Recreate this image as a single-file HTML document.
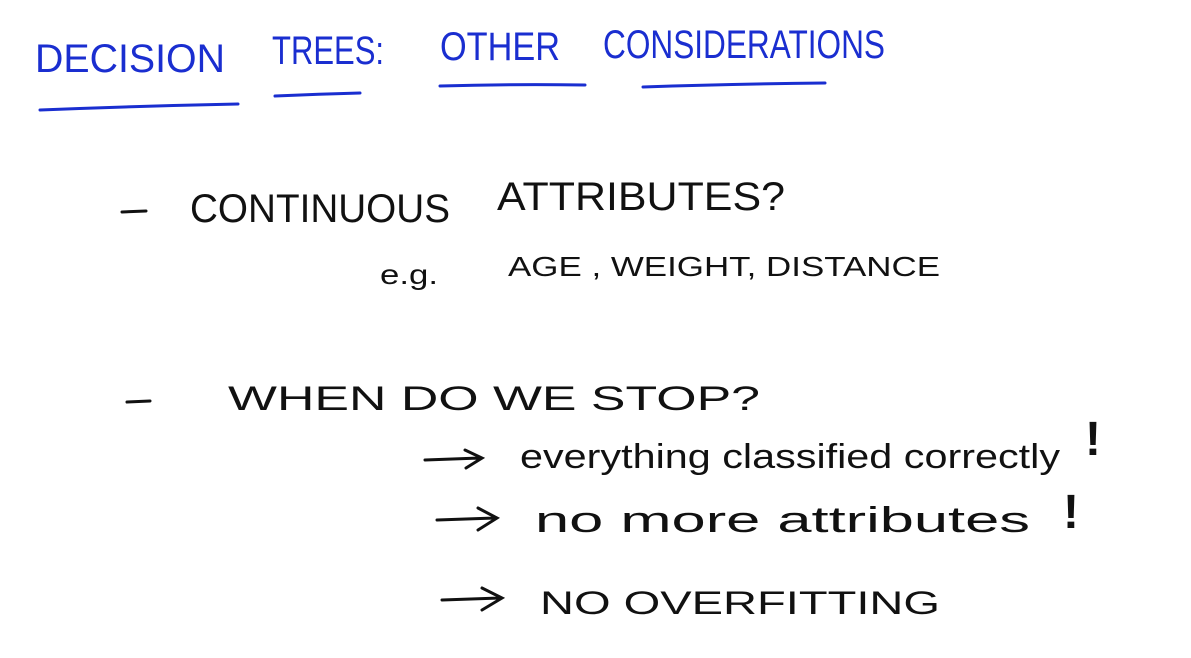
<!DOCTYPE html>
<html><head><meta charset="utf-8"><style>
html,body{margin:0;padding:0;background:#fff;width:1191px;height:658px;overflow:hidden}
svg{display:block}
text{font-family:"Liberation Sans",sans-serif}
</style></head><body>
<svg width="1191" height="658" viewBox="0 0 1191 658">
<g fill="#1a2ed0" font-size="40">
<text x="35" y="72" textLength="190" lengthAdjust="spacingAndGlyphs">DECISION</text>
<text x="272" y="64" textLength="112" lengthAdjust="spacingAndGlyphs">TREES:</text>
<text x="440" y="60" textLength="120" lengthAdjust="spacingAndGlyphs">OTHER</text>
<text x="603" y="58" textLength="282" lengthAdjust="spacingAndGlyphs">CONSIDERATIONS</text>
</g>
<g stroke="#1a2ed0" stroke-width="3" fill="none" stroke-linecap="round">
<path d="M40 110 Q140 106 238 104"/>
<path d="M275 96 Q320 94 360 93"/>
<path d="M440 86 Q510 84 585 85"/>
<path d="M643 87 Q730 84 825 83"/>
</g>
<g fill="#111">
<text x="190" y="222" font-size="40" textLength="260" lengthAdjust="spacingAndGlyphs">CONTINUOUS</text>
<text x="497" y="210" font-size="40" textLength="288" lengthAdjust="spacingAndGlyphs">ATTRIBUTES?</text>
<text x="380" y="284" font-size="28" textLength="58" lengthAdjust="spacingAndGlyphs">e.g.</text>
<text x="508" y="276" font-size="28" textLength="432" lengthAdjust="spacingAndGlyphs">AGE , WEIGHT, DISTANCE</text>
<text x="228" y="410" font-size="34" textLength="532" lengthAdjust="spacingAndGlyphs">WHEN  DO  WE  STOP?</text>
<text x="520" y="468" font-size="34" textLength="540" lengthAdjust="spacingAndGlyphs">everything classified correctly</text>
<text x="1085" y="455" font-size="48" font-weight="bold">!</text>
<text x="535" y="532" font-size="36" textLength="495" lengthAdjust="spacingAndGlyphs">no  more  attributes</text>
<text x="1063" y="528" font-size="48" font-weight="bold">!</text>
<text x="540" y="614" font-size="32" textLength="400" lengthAdjust="spacingAndGlyphs">NO  OVERFITTING</text>
</g>
<g stroke="#111" stroke-width="3" fill="none" stroke-linecap="round">
<path d="M122 212 L146 211"/>
<path d="M127 402 L150 401"/>
<path d="M425 460 L480 458 M465 450 L482 458 L466 468"/>
<path d="M437 520 L495 518 M478 508 L497 518 L478 530"/>
<path d="M442 600 L500 598 M482 588 L502 598 L482 610"/>
</g>
</svg>
</body></html>
